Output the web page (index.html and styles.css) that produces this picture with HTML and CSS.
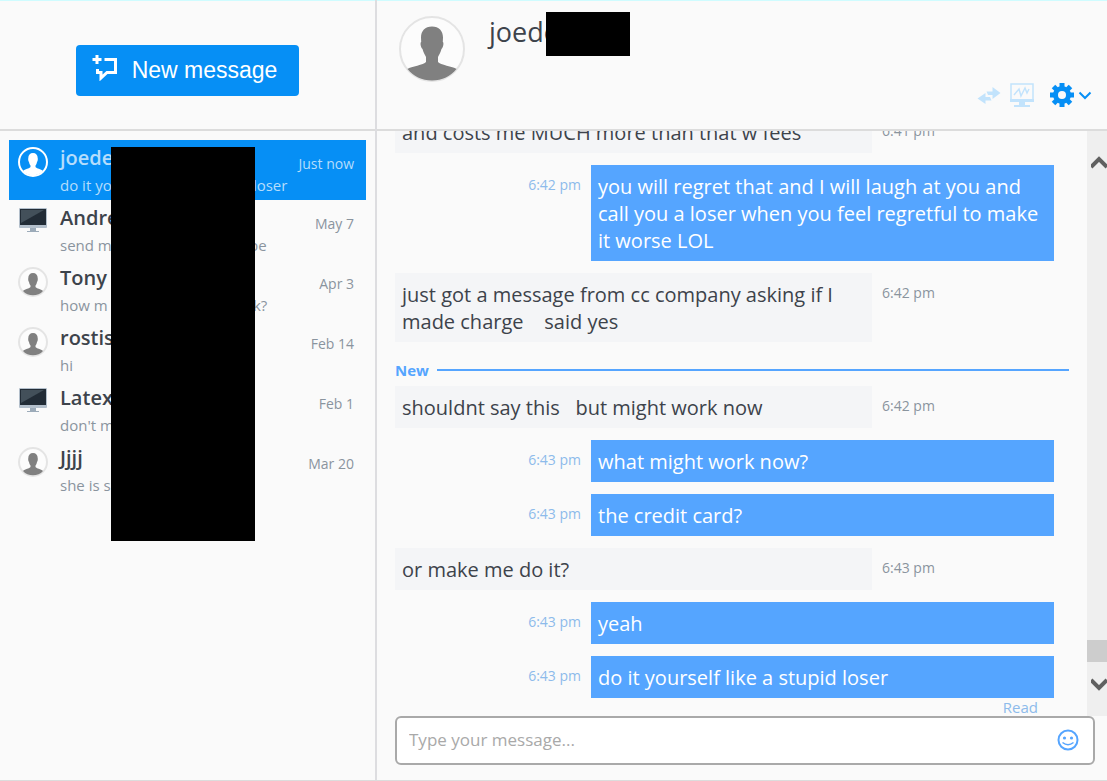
FILE: index.html
```
<!DOCTYPE html>
<html lang="en">
<head>
    <meta charset="UTF-8">
    <meta name="viewport" content="width=device-width, initial-scale=1">
    <title>Messages</title>
    <link rel="stylesheet" href="styles.css">
</head>
<body>
    <!-- Shared icons -->
    <svg class="sprite" aria-hidden="true">
        <symbol id="person" viewBox="0 0 66 66">
            <circle class="avatar-ring" cx="33" cy="33" r="32"/>
            <path class="avatar-body" d="M33 10.500C26 10.500 22 15 22 21.500L22.200 26C21 26.500 21.500 31 23.500 33C24.500 37 26.500 39.500 27 41V46C25 49 12 50.500 8.500 53C14 60 23 64.500 33 64.500S52 60 57.500 53C54 50.500 41 49 39 46V41C39.500 39.500 41.500 37 42.500 33C44.500 31 45 26.500 43.800 26L44 21.500C44 15 40 10.500 33 10.500Z"/>
        </symbol>
        <symbol id="person-small" viewBox="0 0 30 30">
            <circle class="avatar-ring" cx="15" cy="15" r="14"/>
            <path class="avatar-body" d="M15 6C12 6 10.300 8 10.300 11C10 12.500 10.300 14 11 15C11.300 17 12 18 12.500 18.500V20C11.500 21.500 7 22 5 24C7.500 27 11 28.300 15 28.300S22.500 27 25 24C23 22 18.500 21.500 17.500 20V18.500C18 18 18.700 17 19 15C19.700 14 20 12.500 19.700 11C19.700 8 18 6 15 6Z"/>
        </symbol>
        <symbol id="monitor" viewBox="0 0 30 30">
            <rect x="1" y="1" width="28" height="20" rx="1" fill="#b3bfcb"/>
            <rect x="2" y="2" width="26" height="16" fill="#222c36"/>
            <path d="M3 3H26L3 16Z" fill="#43505a"/>
            <path d="M12 21H18V24H21V25H9V24H12Z" fill="#9cabb9"/>
        </symbol>
    </svg>

    <div class="app">
        <!-- Conversation list -->
        <aside class="sidebar">
            <div class="sidebar-head">
                <button class="new-message" type="button">
                    <svg width="26" height="26" viewBox="0 0 26 26" aria-hidden="true">
                        <path d="M5 0V9M0.500 4.500H9.500" stroke="#fff" stroke-width="3" fill="none"/>
                        <path d="M12.500 4.500H23.500V17.500H15L9 23V17.500H5.500V14" stroke="#fff" stroke-width="3" fill="none"/>
                    </svg>
                    <span>New message</span>
                </button>
            </div>
            <nav class="chats" aria-label="Conversations">
                <a class="chat active" href="#">
                    <svg class="avatar"><use href="#person-small"/></svg>
                    <span class="chat-name">joede</span>
                    <span class="chat-date">Just now</span>
                    <span class="preview"><span class="start">do it yo</span><span class="tail"> loser</span></span>
                </a>
                <a class="chat" href="#">
                    <svg class="avatar"><use href="#monitor"/></svg>
                    <span class="chat-name">Andre</span>
                    <span class="chat-date">May 7</span>
                    <span class="preview"><span class="start">send m</span><span class="tail">be</span></span>
                </a>
                <a class="chat" href="#">
                    <svg class="avatar"><use href="#person-small"/></svg>
                    <span class="chat-name">Tony</span>
                    <span class="chat-date">Apr 3</span>
                    <span class="preview"><span class="start">how m</span><span class="tail"> k?</span></span>
                </a>
                <a class="chat" href="#">
                    <svg class="avatar"><use href="#person-small"/></svg>
                    <span class="chat-name">rostis</span>
                    <span class="chat-date">Feb 14</span>
                    <span class="preview"><span class="start">hi</span></span>
                </a>
                <a class="chat" href="#">
                    <svg class="avatar"><use href="#monitor"/></svg>
                    <span class="chat-name">Latex</span>
                    <span class="chat-date">Feb 1</span>
                    <span class="preview"><span class="start">don't m</span></span>
                </a>
                <a class="chat" href="#">
                    <svg class="avatar"><use href="#person-small"/></svg>
                    <span class="chat-name">Jjjj</span>
                    <span class="chat-date">Mar 20</span>
                    <span class="preview"><span class="start">she is s</span></span>
                </a>
                <div class="redacted redacted-list"></div>
            </nav>
        </aside>

        <!-- Open conversation -->
        <main class="conversation">
            <header class="conversation-head">
                <svg class="avatar-large" role="img" aria-label="Profile picture"><use href="#person"/></svg>
                <h1 class="contact">joede<span class="redacted redacted-name"></span></h1>
                <div class="tools">
                    <button class="tool" type="button" aria-label="Transfer">
                        <svg width="24" height="24" viewBox="0 0 24 24">
                            <path d="M9.500 8.500H15.500V4L23.500 10L15.500 16V12H11ZM8.500 10L0.500 15.500L8.500 21V17.500H14.500L13 14H8.500Z" fill="#c2e3fc"/>
                        </svg>
                    </button>
                    <button class="tool" type="button" aria-label="Activity">
                        <svg width="26" height="26" viewBox="0 0 26 26">
                            <path d="M2 2H24V19H2Z" fill="none" stroke="#c2e3fc" stroke-width="1.500"/>
                            <path d="M1 17H25V20H1ZM10 20H16V23H21V25H5V23H10Z" fill="#c2e3fc"/>
                            <path d="M5 13L10 7L12 14L16 6L18 11L20 7" fill="none" stroke="#c2e3fc" stroke-width="1.500"/>
                        </svg>
                    </button>
                    <button class="tool settings" type="button" aria-label="Settings">
                        <svg width="24" height="24" viewBox="0 0 24 24">
                            <g fill="#068ff5">
                                <g id="teeth">
                                    <path d="M9.500 0H14.500V24H9.500Z"/>
                                    <path d="M0 9.500H24V14.500H0Z"/>
                                </g>
                                <use href="#teeth" transform="rotate(45 12 12)"/>
                                <circle cx="12" cy="12" r="9"/>
                            </g>
                            <circle cx="12" cy="12" r="4" fill="#fafafa"/>
                        </svg>
                        <svg width="14" height="10" viewBox="0 0 14 10">
                            <path d="M1.500 2.500L7 8L12.500 2.500" fill="none" stroke="#068ff5" stroke-width="2"/>
                        </svg>
                    </button>
                </div>
            </header>

            <div class="history">
                <div class="messages">
                    <div class="message incoming"><p class="bubble">and costs me MUCH more than that w fees</p><time>6:41 pm</time></div>
                    <div class="message outgoing"><time>6:42 pm</time><p class="bubble">you will regret that and I will laugh at you and call you a loser when you feel regretful to make it worse LOL</p></div>
                    <div class="message incoming"><p class="bubble">just got a message from cc company asking if I made charge    said yes</p><time>6:42 pm</time></div>
                    <div class="divider">New</div>
                    <div class="message incoming"><p class="bubble">shouldnt say this   but might work now</p><time>6:42 pm</time></div>
                    <div class="message outgoing"><time>6:43 pm</time><p class="bubble">what might work now?</p></div>
                    <div class="message outgoing"><time>6:43 pm</time><p class="bubble">the credit card?</p></div>
                    <div class="message incoming"><p class="bubble">or make me do it?</p><time>6:43 pm</time></div>
                    <div class="message outgoing"><time>6:43 pm</time><p class="bubble">yeah</p></div>
                    <div class="message outgoing last"><time>6:43 pm</time><p class="bubble">do it yourself like a stupid loser</p></div>
                    <div class="receipt">Read</div>
                </div>
                <div class="scrollbar">
                    <button class="scroll-button scroll-up" type="button" aria-label="Scroll up">
                        <svg width="16" height="14" viewBox="0 0 16 14"><path d="M0 12L8 4L16 12" fill="none" stroke="#606060" stroke-width="4"/></svg>
                    </button>
                    <div class="thumb"></div>
                    <button class="scroll-button scroll-down" type="button" aria-label="Scroll down">
                        <svg width="16" height="14" viewBox="0 0 16 14"><path d="M0 2L8 10L16 2" fill="none" stroke="#606060" stroke-width="4"/></svg>
                    </button>
                </div>
            </div>

            <form class="composer">
                <input type="text" aria-label="Message" placeholder="Type your message...">
                <button class="emoji" type="button" aria-label="Insert emoji">
                    <svg width="22" height="22" viewBox="0 0 22 22">
                        <circle cx="11" cy="11" r="9.500" fill="none" stroke="#55a5ff" stroke-width="2"/>
                        <circle cx="7.500" cy="9" r="1.600" fill="#55a5ff"/>
                        <circle cx="14.500" cy="9" r="1.600" fill="#55a5ff"/>
                        <path d="M5.500 13.500Q11 18 16.500 13.500" fill="none" stroke="#55a5ff" stroke-width="1.500"/>
                    </svg>
                </button>
            </form>
        </main>
    </div>
</body>
</html>
```
FILE: styles.css
```
* {
    box-sizing: border-box;
}

body {
    margin: 0;
    font-family: "Segoe UI", "Open Sans", "Noto Sans", sans-serif;
    font-size: 14px;
    color: #3d434b;
    background: #fafafa;
}

button {
    padding: 0;
    border: none;
    background: none;
    cursor: pointer;
}

svg {
    display: block;
}

.sprite {
    position: absolute;
    width: 0;
    height: 0;
}

.app {
    display: grid;
    grid-template-columns: 377px 1fr;
    height: 100vh;
    border-bottom: 1px solid #dcdcdc;
    box-shadow: inset 0 1px #cffcff;
}

/* Sidebar */
.sidebar {
    border-right: 2px solid #dddde0;
}

.sidebar-head {
    display: flex;
    align-items: center;
    justify-content: center;
    height: 131px;
    padding-top: 12px;
    border-bottom: 2px solid #dcdcdc;
}

.new-message {
    display: flex;
    align-items: center;
    gap: 14px;
    height: 51px;
    padding: 0 22px 0 16px;
    border-radius: 4px;
    background: #068ff5;
    color: #fff;
    font-family: "Liberation Sans", Arial, sans-serif;
    font-size: 23px;
}

.new-message svg {
    margin-bottom: 6px;
}

.chats {
    position: relative;
    padding: 9px;
}

.chat {
    display: grid;
    grid-template-columns: 30px 1fr auto;
    grid-template-rows: 32px 20px;
    column-gap: 12px;
    height: 60px;
    padding: 1px 12px 0 9px;
    color: #3d434b;
    text-decoration: none;
}

.avatar {
    width: 30px;
    height: 30px;
    margin-top: 6px;
}

.avatar-ring {
    fill: var(--avatar-fill, #fcfcfc);
    stroke: var(--avatar-ring, #e4e4e4);
    stroke-width: 2;
}

.avatar-body {
    fill: var(--avatar-body, #808080);
}

.chat-name {
    font-size: 20px;
    font-weight: 600;
    line-height: 34px;
}

.chat-date {
    padding-top: 7px;
    font-size: 14px;
    line-height: 32px;
    color: #8a949e;
}

.preview {
    display: flex;
    grid-column: 2 / 4;
    font-size: 15px;
    line-height: 24px;
    color: #8a949e;
    white-space: pre;
}

.start {
    width: 189px;
}

.active {
    --avatar-fill: #068ff5;
    --avatar-ring: #fff;
    --avatar-body: #fff;
    background: #068ff5;
}

.active .chat-name,
.active .chat-date,
.active .preview {
    color: #b5ddfc;
}

.redacted {
    position: absolute;
    background: #000;
}

.redacted-list {
    top: 16px;
    left: 111px;
    width: 144px;
    height: 394px;
}

/* Conversation */
.conversation {
    display: flex;
    flex-direction: column;
    min-width: 0;
    min-height: 0;
}

.conversation-head {
    display: flex;
    flex: none;
    height: 131px;
    padding: 16px 15px 0 22px;
    border-bottom: 2px solid #dcdcdc;
}

.avatar-large {
    width: 66px;
    height: 66px;
}

.contact {
    position: relative;
    flex: 1;
    margin: 0 0 0 24px;
    font-size: 27px;
    font-weight: 400;
    line-height: 32px;
}

.redacted-name {
    top: -4px;
    left: 57px;
    width: 84px;
    height: 44px;
}

.tools {
    display: flex;
    align-items: center;
    gap: 8px;
    align-self: flex-end;
    margin-bottom: 21px;
}

.settings {
    display: flex;
    align-items: center;
    gap: 4px;
    margin-left: 7px;
}

.history {
    display: flex;
    flex: 1;
    min-height: 0;
}

.messages {
    display: flex;
    flex: 1;
    flex-direction: column;
    justify-content: flex-end;
    padding: 0 18px;
    overflow: hidden;
}

.message {
    display: flex;
    flex: none;
    margin-bottom: 12px;
}

.last {
    margin-bottom: 0;
}

.bubble {
    flex: 1;
    margin: 0;
    padding: 8px 7px 7px;
    font-size: 20px;
    line-height: 27px;
    white-space: pre-wrap;
}

.message time {
    flex: 0 0 197px;
    padding: 10px;
    font-size: 14px;
    line-height: 20px;
    color: #8a949e;
}

.incoming .bubble {
    background: #f4f5f7;
}

.outgoing {
    margin-right: 15px;
}

.outgoing time {
    flex-basis: 196px;
    color: #8dbbeb;
    text-align: right;
}

.outgoing .bubble {
    background: #55a5ff;
    color: #fff;
}

.divider {
    display: flex;
    flex: none;
    align-items: center;
    gap: 8px;
    margin: 6px 0;
    font-size: 15px;
    font-weight: 700;
    line-height: 20px;
    color: #55a5ff;
}

.divider::after {
    content: "";
    flex: 1;
    height: 2px;
    background: #55a5ff;
}

.receipt {
    flex: none;
    height: 18px;
    padding-right: 31px;
    font-size: 15px;
    line-height: 18px;
    color: #8dbbeb;
    text-align: right;
}

.scrollbar {
    flex: 0 0 18px;
    display: flex;
    flex-direction: column;
    background: #efefef;
}

.scroll-button {
    height: 54px;
    padding-left: 4px;
    overflow: hidden;
}

.scroll-up {
    padding-top: 8px;
}

.scroll-down {
    padding-bottom: 8px;
}

.thumb {
    height: 22px;
    margin-top: auto;
    background: #cdcdcd;
}

.composer {
    display: flex;
    flex: none;
    align-items: center;
    height: 49px;
    margin: 0 12px 15px 18px;
    padding: 0 14px 2px 12px;
    border: 2px solid #a9a9a9;
    border-radius: 6px;
    background: #fff;
}

.composer input {
    flex: 1;
    min-width: 0;
    padding: 0;
    border: none;
    outline: none;
    background: none;
    font: inherit;
    font-size: 17px;
}

.composer input::placeholder {
    color: #a9a9a9;
}
```
